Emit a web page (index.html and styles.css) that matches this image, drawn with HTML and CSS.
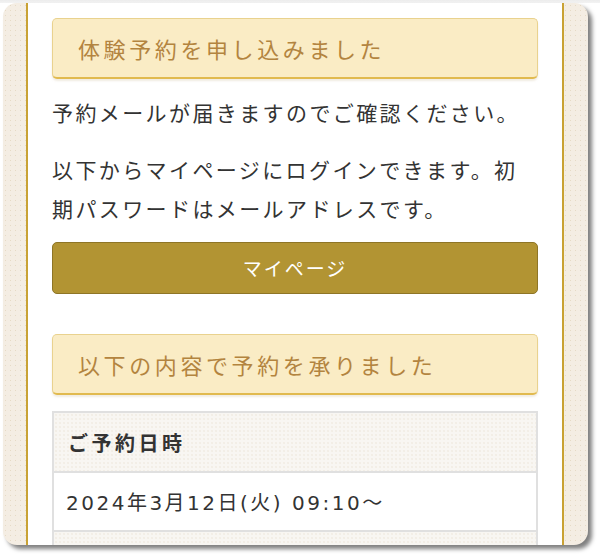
FILE: index.html
```html
<!DOCTYPE html>
<html lang="ja">
<head>
<meta charset="utf-8">
<title>体験予約完了</title>
<link rel="stylesheet" href="styles.css">
</head>
<body>
<div class="frame">
  <div class="card">
    <div class="column">
      <h2 class="heading">体験予約を申し込みました</h2>
      <p class="text">予約メールが届きますのでご確認ください。</p>
      <p class="text">以下からマイページにログインできます。初期パスワードはメールアドレスです。</p>
      <a class="button" href="#">マイページ</a>
      <h2 class="heading heading-second">以下の内容で予約を承りました</h2>
      <table class="info">
        <tr><th class="info-head">ご予約日時</th></tr>
        <tr><td class="info-cell">2024年3月12日(火) 09:10～</td></tr>
        <tr><th class="info-head info-next"></th></tr>
      </table>
    </div>
  </div>
</div>
</body>
</html>
```

FILE: styles.css
```css
html, body {
  margin: 0;
  padding: 0;
  background: #ffffff;
}
body {
  font-family: "Noto Sans CJK JP", "Noto Sans", sans-serif;
  color: #333333;
}
.frame {
  width: 600px;
  height: 559px;
  padding-top: 3px;
  box-sizing: border-box;
  background: linear-gradient(#ececec 0, #f3f3f3 3px, #ffffff 3px);
  overflow: hidden;
}
.card {
  margin-left: 3px;
  width: 585px;
  height: 542px;
  box-sizing: border-box;
  padding: 0 24px 0 23px;
  border-radius: 14px;
  background-color: #f4ede3;
  background-image: radial-gradient(rgba(214, 196, 160, 0.45) 0.6px, transparent 0.9px);
  background-size: 5px 5px;
  box-shadow: 4px 4px 4px rgba(0, 0, 0, 0.5);
  overflow: hidden;
}
.column {
  height: 100%;
  box-sizing: border-box;
  background: #ffffff;
  border-left: 2px solid #c9a234;
  border-right: 2px solid #c9a234;
  padding: 15px 24px 0 24px;
}
.heading {
  margin: 0;
  background: #faecc5;
  border: 1px solid #e9d28e;
  border-bottom: 2px solid #e1ba4f;
  border-radius: 5px;
  box-shadow: 0 2px 2px rgba(200, 180, 140, 0.25);
  padding: 14px 20px 14px 25px;
  font-size: 22px;
  line-height: 30px;
  font-weight: normal;
  letter-spacing: 3.6px;
  color: #b3843f;
}
.heading-second {
  margin-top: 40px;
}
.text {
  margin: 14px 0 18px 0;
  font-size: 21px;
  line-height: 39px;
  letter-spacing: 2.4px;
  color: #333333;
}
.text + .text {
  margin-top: 0;
  margin-bottom: 14px;
}
.button {
  display: block;
  height: 52px;
  box-sizing: border-box;
  background: #b29433;
  border: 1px solid #8e7526;
  border-radius: 5px;
  color: #ffffff;
  text-decoration: none;
  text-align: center;
  font-size: 19px;
  line-height: 50px;
  letter-spacing: 2px;
}
.info {
  margin-top: 16px;
  width: 100%;
  border-collapse: collapse;
  border: 2px solid #e0e0e0;
}
.info-head {
  background-color: #f8f6f2;
  background-image: radial-gradient(rgba(220, 210, 190, 0.35) 0.6px, transparent 0.9px);
  background-size: 4px 4px;
  text-align: left;
  font-weight: bold;
  font-size: 20px;
  letter-spacing: 3.5px;
  color: #333333;
  height: 58px;
  padding: 0 0 0 14px;
  border-bottom: 2px solid #e0e0e0;
}
.info-cell {
  font-family: "DejaVu Sans", "Noto Sans CJK JP", sans-serif;
  font-size: 20px;
  letter-spacing: 2.5px;
  color: #333333;
  height: 57px;
  padding: 0 0 0 12px;
  border-bottom: 2px solid #e0e0e0;
}
```
